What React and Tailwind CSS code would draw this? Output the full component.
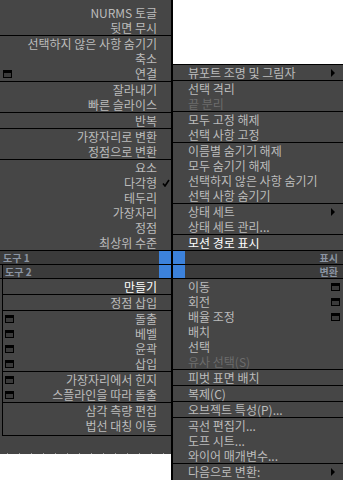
import React from "react";

const FONT = "font-['Noto_Sans_CJK_KR','Noto_Sans',sans-serif]";

function WinIcon() {
  return <div className="w-[9px] h-[8px] border border-black border-t-[3px] bg-[#3a3a3a] shrink-0" />;
}

function Arrow() {
  return (
    <svg width="4" height="8" viewBox="0 0 4 8" className="shrink-0">
      <polygon points="0,0 4,4 0,8" fill="#000" />
    </svg>
  );
}

function Check() {
  return (
    <svg width="8" height="8" viewBox="0 0 8 8">
      <path d="M1 4.5 L3 7 L7 1" stroke="#000" strokeWidth="1.6" fill="none" />
    </svg>
  );
}

function color(it) {
  if (it.hi) return "text-white";
  if (it.dis) return "text-[#6c6c6c]";
  return "text-[#bcbcbc]";
}

function LeftRow({ it, iconOffset }) {
  return (
    <div className="flex items-center h-[15px]">
      <div className={iconOffset}>{it.icon ? <WinIcon /> : null}</div>
      <div className="flex-1" />
      <span className={`${color(it)} block h-[15px] leading-[15px] whitespace-nowrap`}>{it.t}</span>
      <div className="w-[14px] h-[15px] flex items-center justify-end pr-[1px]">
        {it.check ? <Check /> : null}
      </div>
    </div>
  );
}

function RightRow({ it }) {
  return (
    <div className="flex items-center h-[15px] pl-[15px] pr-[3px]">
      <span className={`${color(it)} block h-[15px] leading-[15px] whitespace-nowrap`}>{it.t}</span>
      <div className="flex-1" />
      {it.arrow ? <div className="mr-[5px] flex"><Arrow /></div> : null}
      {it.icon ? <WinIcon /> : null}
    </div>
  );
}

function Sections({ sections, side, iconOffset }) {
  return sections.map((sec, i) => (
    <div key={i} className={i < sections.length - 1 ? "border-b border-black" : ""}>
      {sec.map((it, j) =>
        side === "left" ? <LeftRow key={j} it={it} iconOffset={iconOffset} /> : <RightRow key={j} it={it} />
      )}
    </div>
  ));
}

const topLeft = [
  [{ t: "NURMS 토글" }, { t: "뒷면 무시" }],
  [{ t: "선택하지 않은 사항 숨기기" }, { t: "축소" }, { t: "연결", icon: true }],
  [{ t: "잘라내기" }, { t: "빠른 슬라이스" }],
  [{ t: "반복" }],
  [{ t: "가장자리로 변환" }, { t: "정점으로 변환" }],
  [
    { t: "요소" },
    { t: "다각형", check: true },
    { t: "테두리" },
    { t: "가장자리" },
    { t: "정점" },
    { t: "최상위 수준" },
  ],
];

const topRight = [
  [{ t: "뷰포트 조명 및 그림자", arrow: true }],
  [{ t: "선택 격리" }, { t: "끝 분리", dis: true }],
  [{ t: "모두 고정 해제" }, { t: "선택 사항 고정" }],
  [
    { t: "이름별 숨기기 해제" },
    { t: "모두 숨기기 해제" },
    { t: "선택하지 않은 사항 숨기기" },
    { t: "선택 사항 숨기기" },
  ],
  [{ t: "상태 세트", arrow: true }, { t: "상태 세트 관리..." }],
  [{ t: "모션 경로 표시", hi: true }],
];

const bottomLeft = [
  [{ t: "만들기", hi: true }],
  [{ t: "정점 삽입" }],
  [
    { t: "돌출", icon: true },
    { t: "베벨", icon: true },
    { t: "윤곽", icon: true },
    { t: "삽입", icon: true },
  ],
  [
    { t: "가장자리에서 힌지", icon: true },
    { t: "스플라인을 따라 돌출", icon: true },
  ],
  [{ t: "삼각 측량 편집" }, { t: "법선 대칭 이동" }],
];

const bottomRight = [
  [
    { t: "이동", icon: true },
    { t: "회전", icon: true },
    { t: "배율 조정", icon: true },
    { t: "배치" },
    { t: "선택" },
    { t: "유사 선택(S)", dis: true },
  ],
  [{ t: "피벗 표면 배치" }],
  [{ t: "복제(C)" }],
  [{ t: "오브젝트 특성(P)..." }],
  [{ t: "곡선 편집기..." }, { t: "도프 시트..." }, { t: "와이어 매개변수..." }],
  [{ t: "다음으로 변환:", arrow: true }],
];

export default function App() {
  return (
    <div className={`w-[343px] h-[480px] bg-white overflow-hidden text-[12px] leading-[15px] ${FONT}`}>
      {/* top row */}
      <div className="flex h-[251px]">
        <div className="w-[173px] bg-[#464646] border-r-2 border-black border-b pt-[5px]">
          <Sections sections={topLeft} side="left" iconOffset="pl-[3px]" />
        </div>
        <div className="flex-1 flex flex-col">
          <div className="h-[64px] bg-white" />
          <div className="flex-1 bg-[#464646] border-t border-b border-black">
            <Sections sections={topRight} side="right" />
          </div>
        </div>
      </div>

      {/* title bars */}
      <div className="flex h-[14px] border-b border-black font-bold text-[10px] leading-[13px] text-[#8b95a3]">
        <div className="w-[159px] bg-[#3b3b3b] pl-[3px]"><span className="block h-[13px]">도구 1</span></div>
        <div className="w-[12px] bg-[#3c82dc]" />
        <div className="w-[2px] bg-black" />
        <div className="w-[12px] bg-[#3c82dc]" />
        <div className="flex-1 bg-[#3b3b3b] pr-[5px] flex justify-end"><span className="block h-[13px]">표시</span></div>
      </div>
      <div className="flex h-[14px] border-b border-black font-bold text-[10px] leading-[13px] text-[#8b95a3]">
        <div className="w-[2px] bg-[#454545]" />
        <div className="w-[157px] bg-[#3b3b3b] border-l border-black pl-[2px]"><span className="block h-[13px]">도구 2</span></div>
        <div className="w-[12px] bg-[#3c82dc]" />
        <div className="w-[2px] bg-black" />
        <div className="w-[12px] bg-[#3c82dc]" />
        <div className="flex-1 bg-[#3b3b3b] pr-[5px] flex justify-end"><span className="block h-[13px]">변환</span></div>
      </div>

      {/* bottom row */}
      <div className="flex h-[202px]">
        <div className="w-[171px] flex flex-col">
          <div className="flex h-[157px] bg-[#444444]">
            <div className="w-[2px] bg-[#444444]" />
            <div className="flex-1 bg-[#464646] border-l border-b border-black pb-[2px]">
              <Sections sections={bottomLeft} side="left" iconOffset="pl-[2px]" />
            </div>
          </div>
          <div className="h-[17px] bg-[#444444]" />
          <div className="h-[1px] bg-[repeating-linear-gradient(90deg,#444444_0px,#444444_7px,#9a9a9a_7px,#9a9a9a_8px,#444444_8px,#444444_12px)]" />
          <div className="flex-1 bg-white" />
        </div>
        <div className="flex-1 bg-[#464646] border-l-2 border-b border-black">
          <Sections sections={bottomRight} side="right" />
        </div>
      </div>
    </div>
  );
}
